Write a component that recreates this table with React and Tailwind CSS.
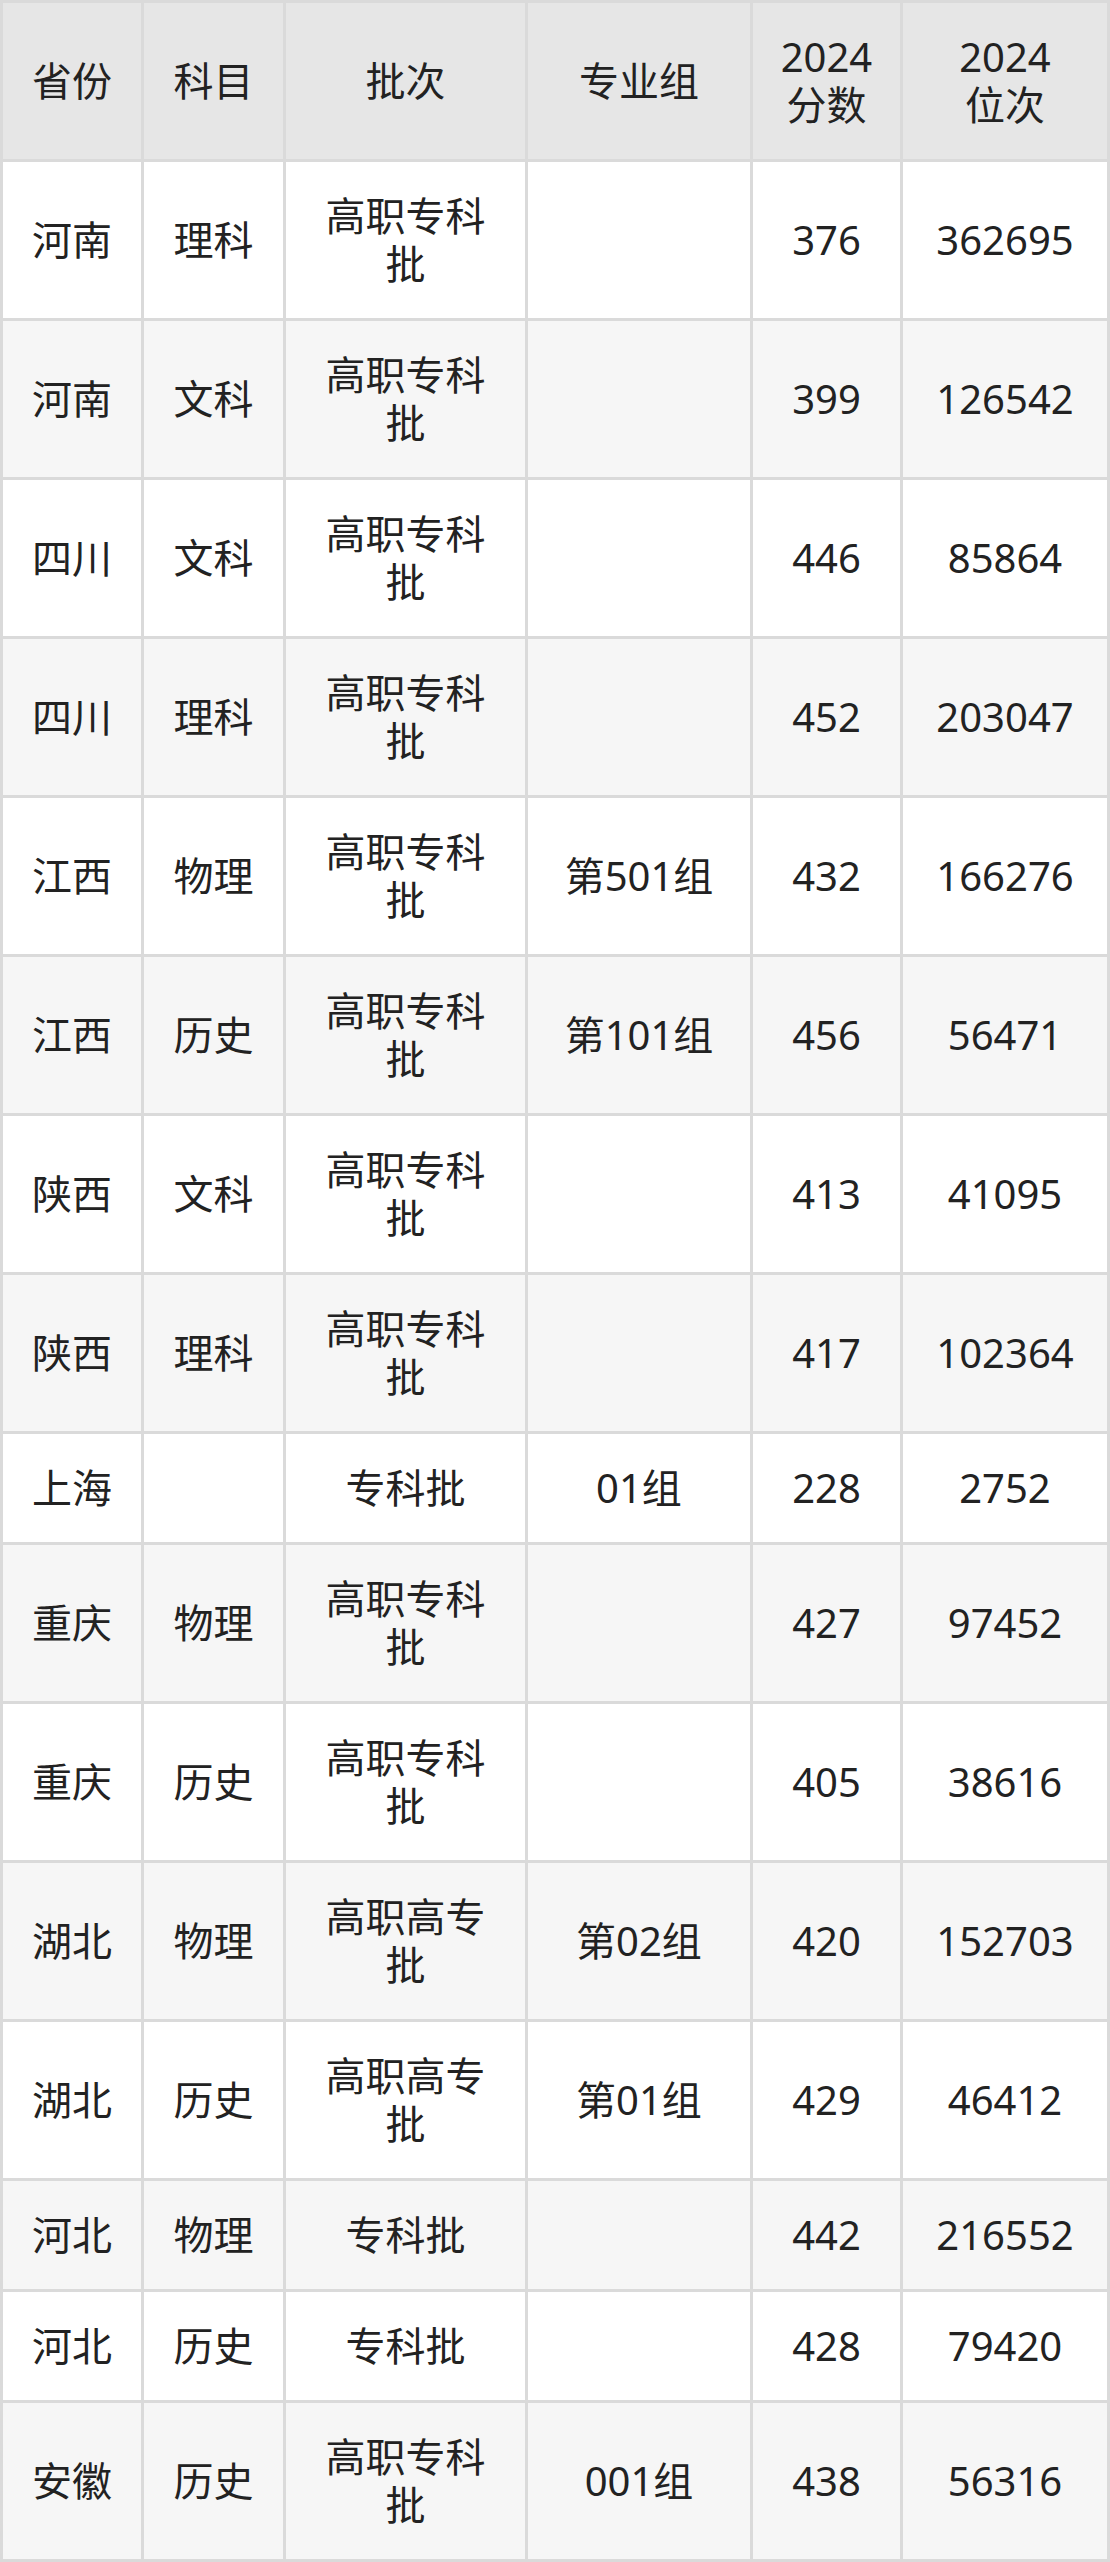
import React from 'react';

const headers = [['省份'], ['科目'], ['批次'], ['专业组'], ['2024', '分数'], ['2024', '位次']];

const rows = [
  ['河南', '理科', '高职专科批', '', '376', '362695'],
  ['河南', '文科', '高职专科批', '', '399', '126542'],
  ['四川', '文科', '高职专科批', '', '446', '85864'],
  ['四川', '理科', '高职专科批', '', '452', '203047'],
  ['江西', '物理', '高职专科批', '第501组', '432', '166276'],
  ['江西', '历史', '高职专科批', '第101组', '456', '56471'],
  ['陕西', '文科', '高职专科批', '', '413', '41095'],
  ['陕西', '理科', '高职专科批', '', '417', '102364'],
  ['上海', '', '专科批', '01组', '228', '2752'],
  ['重庆', '物理', '高职专科批', '', '427', '97452'],
  ['重庆', '历史', '高职专科批', '', '405', '38616'],
  ['湖北', '物理', '高职高专批', '第02组', '420', '152703'],
  ['湖北', '历史', '高职高专批', '第01组', '429', '46412'],
  ['河北', '物理', '专科批', '', '442', '216552'],
  ['河北', '历史', '专科批', '', '428', '79420'],
  ['安徽', '历史', '高职专科批', '001组', '438', '56316'],
];

const Cell = ({ children, className }) => (
  <div className={`flex items-center justify-center text-center px-6 py-[30px] leading-[48px] ${className}`}>
    <span>{children}</span>
  </div>
);

const App = () => {
  return (
    <div
      className="w-[1110px] bg-white text-[#222] text-[40px]"
      style={{ fontFamily: '"Noto Sans", "Noto Sans CJK SC", sans-serif' }}
    >
      <div className="grid grid-cols-[138px_139px_239px_222px_147px_204px] gap-[3px] p-[3px] bg-[#dadada]">
        {headers.map((h, i) => (
          <Cell key={`h${i}`} className="bg-[#e6e6e6]">
            {h.map((line, j) => (
              <React.Fragment key={j}>
                {j > 0 && <br />}
                {line}
              </React.Fragment>
            ))}
          </Cell>
        ))}
        {rows.map((row, r) =>
          row.map((val, c) => (
            <Cell key={`${r}-${c}`} className={r % 2 === 0 ? 'bg-white' : 'bg-[#f6f6f6]'}>
              {val}
            </Cell>
          ))
        )}
      </div>
    </div>
  );
};

export default App;
